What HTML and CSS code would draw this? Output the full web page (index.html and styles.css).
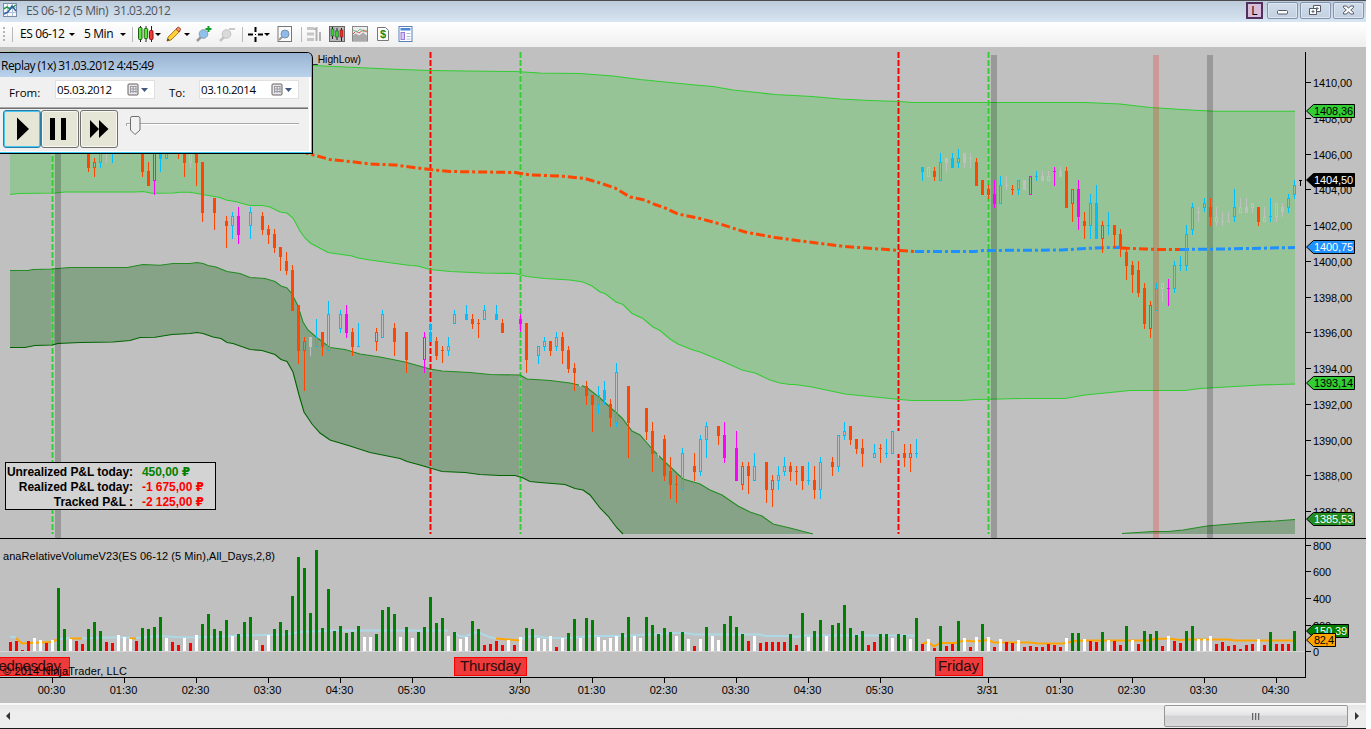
FILE: index.html
```html
<!DOCTYPE html>
<html lang="en">

<head>
    <meta charset="UTF-8">
    <title>ES 06-12 (5 Min) 31.03.2012</title>
    <link rel="stylesheet" href="styles.css">
</head>

<body>
    <div id="window">
        <div class="titlebar">
            <svg class="app-icon" width="14" height="14" viewBox="0 0 14 14">
                <rect x="0.5" y="0.5" width="13" height="13" fill="#f4f8fc" stroke="#7a8ba8" />
                <path d="M4.5 1v12M9.5 1v12M1 4.5h12M1 9.5h12" stroke="#b5c4dc" fill="none" />
                <path d="M1 6l3-2 3 2 6-4" stroke="#1c9a3c" stroke-width="1.5" fill="none" />
                <path d="M1 11l4-2 4-6 4 5" stroke="#2e5fa8" stroke-width="1.5" fill="none" />
            </svg>
            <span class="title">ES 06-12 (5 Min)&nbsp; 31.03.2012</span>
            <span class="link-btn">L</span>
            <span class="win-btn">
                <svg width="31" height="16" viewBox="0 0 31 16"><rect x="10.5" y="8.5" width="10" height="3.5" rx="1" fill="#fff" stroke="#555a68" /></svg>
            </span>
            <span class="win-btn">
                <svg width="31" height="16" viewBox="0 0 31 16" fill="#fff" stroke="#555a68"><path d="M13.5 3.5h7v6h-7z" /><path d="M16 6h2v1h-2z" /><path d="M9.5 6.5h7v6h-7z" /><path d="M12 9h2v1h-2z" /></svg>
            </span>
            <span class="win-btn">
                <svg width="31" height="16" viewBox="0 0 31 16"><path d="M10.5 4h3l2 2.3 2-2.3h3v1.500L17.700 8l2.800 2.500V12h-3l-2-2.300-2 2.300h-3v-1.500L13.300 8l-2.800-2.500z" fill="#fff" stroke="#555a68" /></svg>
            </span>
        </div>

        <div class="toolbar">
            <span class="grip"></span>
            <span class="sep"></span>
            <span class="label">ES 06-12</span>
            <i class="caret"></i>
            <span class="label">5 Min</span>
            <i class="caret"></i>
            <span class="sep"></span>
            <svg width="16" height="16" viewBox="0 0 16 16">
                <path d="M2.500 0v16M8 0v16M13.500 0v16" stroke="#222" />
                <rect x="0.500" y="1.500" width="3.500" height="12" rx="1" fill="#5ce63c" stroke="#1d5a12" />
                <rect x="6.200" y="2.500" width="3.500" height="10" rx="1" fill="#5ce63c" stroke="#1d5a12" />
                <rect x="11.500" y="4.500" width="3.500" height="9" rx="1" fill="#f23a3a" stroke="#8a1212" />
            </svg>
            <i class="caret"></i>
            <svg width="16" height="16" viewBox="0 0 16 16">
                <path d="M1 15l1.200-4L11 2.200l3 3L5 14z" fill="#ffd23c" stroke="#a87416" />
                <path d="M10 3.200l1.800-2c.8-.7 3.200 1.500 2.700 2.600L13 6z" fill="#f0906a" stroke="#a04a28" />
                <path d="M1 15l.8-2.500 1.800 1.500z" fill="#333" />
            </svg>
            <i class="caret"></i>
            <svg width="16" height="16" viewBox="0 0 16 16">
                <path d="M1 15l4-4" stroke="#999" stroke-width="2.500" />
                <circle cx="7.500" cy="8" r="4.300" fill="#8ec2ec" stroke="#8a9bb0" />
                <path d="M12.500 0v6M9.500 3h6" stroke="#12a028" stroke-width="2" />
            </svg>
            <svg width="16" height="16" viewBox="0 0 16 16">
                <path d="M1 15l4-4" stroke="#c4c4c4" stroke-width="2.500" />
                <circle cx="7.500" cy="8" r="4.300" fill="#dadada" stroke="#c0c0c0" />
                <path d="M10 3h6" stroke="#b8b8b8" stroke-width="1.500" />
            </svg>
            <span class="sep"></span>
            <svg width="15" height="15" viewBox="0 0 15 15">
                <path d="M7.500 0v5M7.500 10v5M0 7.500h5M10 7.500h5" stroke="#000" stroke-width="2" />
                <rect x="7" y="7" width="1" height="1" />
            </svg>
            <i class="caret"></i>
            <svg width="16" height="16" viewBox="0 0 16 16">
                <rect x="1" y="0.500" width="13.500" height="15" fill="#fafafa" stroke="#777" />
                <path d="M2 14l3-3" stroke="#999" stroke-width="2" />
                <circle cx="8" cy="8" r="4" fill="#8ebcea" stroke="#7a90b0" />
            </svg>
            <span class="sep"></span>
            <svg width="16" height="16" viewBox="0 0 16 16">
                <path d="M1 2.500h7M1 8h7M1 13.500h7" stroke="#c6c6c6" stroke-width="3" />
                <path d="M10.500 1v14M14 6v9M8 3h3" stroke="#b2b2b2" stroke-width="2" fill="none" />
            </svg>
            <svg width="16" height="16" viewBox="0 0 16 16">
                <rect x="0.500" y="0.500" width="15" height="15" fill="#b8b8b8" stroke="#666" />
                <path d="M3.500 1v12M8 2v12M12.500 2v13" stroke="#222" />
                <rect x="2" y="3" width="3" height="7" fill="#3ccf2c" stroke="#154" stroke-width=".5" />
                <rect x="6.500" y="5" width="3" height="6" fill="#3ccf2c" stroke="#154" stroke-width=".5" />
                <rect x="11" y="4" width="3" height="7" fill="#ee2c2c" stroke="#711" stroke-width=".5" />
            </svg>
            <svg width="16" height="16" viewBox="0 0 16 16">
                <rect x="0.500" y="0.500" width="15" height="14.500" fill="#ececec" stroke="#888" />
                <path d="M1 9l3-1.500 3 2 4-3 4 3V15H1z" fill="#aaa" />
                <path d="M1 8l3-3 3 2 4-3 4 2" stroke="#e05050" fill="none" />
                <path d="M1 4l4 2 3-3 4 3 3-2" stroke="#6cc48c" fill="none" />
            </svg>
            <svg width="14" height="16" viewBox="0 0 14 16">
                <path d="M1.500 1.500h8l3 3v10h-11z" fill="#fff" stroke="#777" />
                <text x="7" y="12" text-anchor="middle" class="dollar">$</text>
            </svg>
            <svg width="15" height="16" viewBox="0 0 15 16">
                <rect x="1" y="0.500" width="13" height="15" fill="#fff" stroke="#5a82b8" />
                <rect x="2.500" y="2" width="10" height="2.500" fill="#4a86d8" />
                <rect x="3" y="6.500" width="3.500" height="7" fill="#d8c6f4" stroke="#9a7ad8" />
                <path d="M8.500 7.500h4M8.500 10.500h4M8.500 13h4" stroke="#a8bcd8" />
            </svg>
        </div>

        <div class="chart-area">
            <svg id="chart" width="1366" height="656" viewBox="0 47 1366 656"></svg>

            <div class="pnl">
                <span>Unrealized P&amp;L today:</span><b class="plus">450,00 ₽</b>
                <span>Realized P&amp;L today:</span><b>-1 675,00 ₽</b>
                <span>Tracked P&amp;L :</span><b>-2 125,00 ₽</b>
            </div>

            <div class="replay">
                <div class="replay-title"><span>Replay (1x) 31.03.2012 4:45:49</span></div>
                <div class="dates">
                    <span class="from">From:</span>
                    <div class="date"><span>05.03.2012</span>
                        <svg width="22" height="14" viewBox="0 0 22 14"><rect x="1" y="1" width="10" height="11" rx="1" fill="#e8e8e8" stroke="#6a6060" /><path d="M3 3.500h6.500M3 6h6.500M3 8.500h6.500M3.500 3v7M6.200 3v7M9 3v7" stroke="#9a9aa4" /><path d="M14 5h7l-3.500 4z" fill="#44587c" /></svg>
                    </div>
                    <span class="to">To:</span>
                    <div class="date"><span>03.10.2014</span>
                        <svg width="22" height="14" viewBox="0 0 22 14"><rect x="1" y="1" width="10" height="11" rx="1" fill="#e8e8e8" stroke="#6a6060" /><path d="M3 3.500h6.500M3 6h6.500M3 8.500h6.500M3.500 3v7M6.200 3v7M9 3v7" stroke="#9a9aa4" /><path d="M14 5h7l-3.500 4z" fill="#44587c" /></svg>
                    </div>
                </div>
                <div class="controls">
                    <button class="active"><svg width="34" height="34" viewBox="0 0 34 34"><path d="M12 5.500v23l12-11.500z" /></svg></button>
                    <button><svg width="34" height="34" viewBox="0 0 34 34"><path d="M7 6h5v22H7zM18 6h5v22h-5z" /></svg></button>
                    <button class="forward"><svg width="34" height="34" viewBox="0 0 34 34"><path d="M8 8v18l9-9zM17 8v18l9.500-9z" /></svg></button>
                    <svg class="slider" width="176" height="24" viewBox="0 0 176 24">
                        <path d="M0 7.500h173" stroke="#a8a8a8" />
                        <path d="M0 8.500h173" stroke="#fff" />
                        <path d="M0.500 7v3" stroke="#a8a8a8" />
                        <path d="M6 .5h6q2 0 2 2V14l-5 4.500L4.500 14V2.500q0-2 1.500-2z" fill="#f2f2f2" stroke="#6e6e6e" />
                    </svg>
                </div>
            </div>
        </div>

        <div class="scrollbar">
            <span class="arrow left"></span>
            <span class="thumb"><i></i><i></i><i></i></span>
            <span class="arrow right"></span>
        </div>
        <div class="edge"></div>
    </div>
    <script src="chart.js"></script>
</body>

</html>
```
FILE: styles.css
```css
body {
    margin: 0;
    background: #fff;
    overflow: hidden;
    font-family: "Open Sans", "Noto Sans", sans-serif;
    font-size: 12px;
}

#window {
    width: 1366px;
    height: 729px;
    display: flex;
    flex-direction: column;
}

.titlebar {
    box-sizing: border-box;
    height: 22px;
    border-top: 1px solid #4c4c50;
    background: linear-gradient(#bccbdb, #d8e5f2);
    display: flex;
    align-items: flex-start;
    padding: 1px 2px 0 3px;
}

.app-icon {
    margin-top: 1px;
}

.title {
    flex: 1;
    margin-left: 9px;
    line-height: 17px;
    color: #4d5560;
    letter-spacing: -0.43px;
}

.link-btn {
    box-sizing: border-box;
    width: 17px;
    height: 17px;
    margin-right: 2px;
    border: 2px solid #50305c;
    background: #d8bcdc;
    line-height: 13px;
    text-align: center;
}

.win-btn {
    box-sizing: border-box;
    width: 31px;
    height: 17px;
    margin-left: 2px;
    border: 1px solid #8594ad;
    border-radius: 2px;
    background: linear-gradient(#d0dcea, #c2d0e0);
    box-shadow: inset 0 0 0 1px #dce6f0;
    overflow: hidden;
}

.win-btn svg {
    display: block;
    margin: -1px 0 0 -1px;
}

.toolbar {
    height: 25px;
    background: linear-gradient(#fff, #efefef);
    display: grid;
    grid-template-columns: 12px 8px 49px 15px 36px 12px 6px 17px 11px 18px 12px 23px 23px 6px 16px 13px 24px 5px 23px 23px 24px 22px 16px;
    align-items: center;
}

.toolbar svg {
    margin-top: -1px;
}

.toolbar .label {
    margin-top: -2px;
    letter-spacing: -0.4px;
    white-space: nowrap;
}

.grip {
    width: 2px;
    height: 15px;
    margin-left: 3px;
    background: repeating-linear-gradient(#b4b4b4 0 2px, transparent 2px 4px);
}

.sep {
    width: 1px;
    height: 15px;
    background: #b9b9b9;
}

.caret {
    border: 3px solid transparent;
    border-top-color: #000;
    border-bottom: 0;
    width: 0;
}

.dollar {
    font: bold 11px "Liberation Sans", sans-serif;
    fill: #148a14;
}

.chart-area {
    position: relative;
    height: 656px;
    background: #c0c0c0;
}

#chart {
    display: block;
    font-family: "Liberation Sans", Arial, sans-serif;
    font-size: 11px;
}

#chart .crisp {
    shape-rendering: crispEdges;
}

#chart .day {
    font-size: 15px;
    fill: #2a0c0c;
}

/* P&L summary lies over the lower left corner of the price panel */
.pnl {
    position: absolute;
    left: 5px;
    top: 415px;
    width: 209px;
    height: 46px;
    border: 1px solid #000;
    background: #d3d3d3;
    display: grid;
    grid-template-columns: 127px auto;
    grid-auto-rows: 15px;
    column-gap: 9px;
    font: bold 12px/19px "Liberation Sans", "DejaVu Sans", sans-serif;
    letter-spacing: -0.05px;
    white-space: nowrap;
}

.pnl span {
    text-align: right;
}

.pnl b {
    color: #f00;
}

.pnl .plus {
    color: #008000;
}

/* floating replay window */
.replay {
    position: absolute;
    left: 0;
    top: 5px;
    box-sizing: border-box;
    width: 313px;
    height: 102px;
    border: 1px solid #000;
    border-left: 0;
    border-top-right-radius: 6px;
    background: #f0f0f0;
    box-shadow: inset -1px -1px 0 #3cc8f0, inset -3px -2px 0 #fff;
    overflow: hidden;
}

.replay-title {
    height: 24px;
    margin-right: 1px;
    padding-left: 1px;
    line-height: 25px;
    letter-spacing: -0.53px;
    background: linear-gradient(#98b3d1, #bad2eb);
}

.dates {
    display: flex;
    height: 31px;
    margin-right: 4px;
    border-bottom: 1px solid #707070;
    box-shadow: 0 -1px 0 #a8a8a8 inset;
    font-size: 11.5px;
}

.dates > span {
    line-height: 32px;
}

.from {
    width: 46px;
    padding-left: 9px;
}

.to {
    width: 30px;
    padding-left: 14px;
}

.date {
    box-sizing: border-box;
    width: 100px;
    height: 19px;
    margin-top: 3px;
    border: 1px solid #e0e0e0;
    background: #fff;
    display: flex;
    justify-content: space-between;
    padding: 0 5px 0 1px;
    line-height: 18px;
    letter-spacing: -0.4px;
}

.date svg {
    margin-top: 2px;
}

.controls {
    display: flex;
    padding: 1px 0 0 3px;
}

.controls button {
    box-sizing: border-box;
    width: 38px;
    height: 38px;
    padding: 0;
    border: 1px solid #707070;
    border-radius: 3px;
    background: #e6e6d6;
    box-shadow: inset 0 0 0 1px #f8f8f0;
}

.controls button svg {
    display: block;
    margin: 1px;
}

.controls .active {
    border-color: #2c7ca8;
    box-shadow: inset 0 0 0 1px #48c8f0;
}

.controls .forward {
    margin-left: 1px;
}

.slider {
    margin: 6px 0 0 8px;
}

.scrollbar {
    box-sizing: border-box;
    height: 25px;
    border-top: 2px solid #f8f8f8;
    background: linear-gradient(#e4e4e4, #eeeeee 30%, #ececec);
    display: flex;
    align-items: center;
    padding-bottom: 1px;
}

.arrow {
    border: 4px solid transparent;
    width: 0;
}

.arrow.left {
    margin-left: 2px;
    border-right-color: #333;
}

.arrow.right {
    margin: 0 3px 0 7px;
    border-left-color: #333;
}

.thumb {
    box-sizing: border-box;
    width: 184px;
    height: 22px;
    margin-left: auto;
    border: 1px solid #979797;
    border-radius: 2px;
    background: linear-gradient(#f3f3f3, #e6e6e8 45%, #d2d2d4 50%, #dadadc);
    display: flex;
    justify-content: center;
    align-items: center;
    gap: 1px;
}

.thumb i {
    width: 2px;
    height: 7px;
    background: linear-gradient(90deg, #666 50%, #bbb 50%);
}

.edge {
    height: 1px;
    background: #16181c;
}
```
FILE: chart.js
```js
const chart = document.getElementById("chart");
const NS = "http://www.w3.org/2000/svg";

function add(tag, attrs, text) {
    const el = document.createElementNS(NS, tag);
    for (const k in attrs) el.setAttribute(k, attrs[k]);
    if (text !== undefined) el.textContent = text;
    chart.appendChild(el);
    return el;
}

function line(points, color, width, dash) {
    const a = { points: points, fill: "none", stroke: color, "stroke-width": width };
    if (dash) a["stroke-dasharray"] = dash;
    add("polyline", a);
}

function rect(x, y, w, h, fill) {
    add("rect", { x: x, y: y, width: w, height: h, fill: fill, class: "crisp" });
}

// deviation bands
const top1 = "10,52 313,65.500 345,67 400,69.500 430,70.500 465,71 515,71.500 540,73 580,73.500 613,76 640,79.500 665,82 695,85 713,86.500 733,90 775,94.500 812,96.500 840,99 870,100.500 900,101.500 912,102.500 1085,102.500 1120,104 1150,107.500 1190,110 1215,111.300 1295,111.300";
const low1 = "10,194.500 18,193.500 55,193 65,192 135,192 143,191.500 152,193.300 173,193 180,192.300 190,192.300 200,194 220,197.500 226,200 235,201.500 250,205.500 262,205.500 270,207 280,212 287,213 293,218 300,231 305,238 311,243.500 328,252.500 352,256 358,258 370,260 410,265.500 418,266 430,269.500 450,271.500 483,273 515,273.500 527,276.500 545,278.500 570,280 583,282 592,286 600,292 605,293.500 616,302 623,304.500 632,313.500 643,318.500 653,327 660,330.500 670,339 678,344 693,350 700,352 722,361 742,370 755,373 770,380 780,383 790,384.500 795,384.500 812,387 845,394 870,396.500 900,399.500 912,400.500 962,400.500 975,399.500 1000,399 1020,398.500 1065,398.500 1085,395 1110,392.500 1130,390.500 1185,390.500 1200,388.500 1230,386.800 1260,385 1295,384";
const top2 = "10,270.500 28,270.500 33,269.500 52,269 70,267.500 127,267.500 143,264.500 160,265.300 173,263.500 190,263.500 197,262.500 203,263.500 208,265.500 216,267 227,271.500 240,273.500 250,277.500 265,278.500 275,281.500 281,286 287,288 292,294 298,306 303,322 308,330 316,337 330,347.500 345,349.500 360,354 380,357 405,362 430,369 442,371 470,372.500 490,374.500 520,375 527,379 550,380.500 570,383 583,386 588,388.500 600,398 612,409 622,418 632,431 640,435 647,443 655,452 665,462 683,479 700,484 710,490 722,495 738,506 750,512 762,516 773,524 790,528 813,534";
const low2 = "10,347.500 25,347.500 35,345.500 52,345 58,343.500 80,342.500 113,342 130,340.500 140,337.500 155,337.300 172,334.500 190,333.500 197,332.500 203,333.500 213,337 221,338.500 227,342.500 233,343.500 250,349.500 262,350.500 275,354.500 281,359.500 287,361.500 293,372 299,395 304,412 312,424 320,433 330,440 350,446 370,452.500 400,458.500 407,461.500 420,465 442,471.500 465,472.500 480,474.500 500,475.500 515,475.500 522,477.500 530,481.500 540,482.500 565,484.500 575,488.500 583,490 590,495 600,508 608,516 617,528 623,534";
const top3 = "1122,533.500 1153,531.500 1168,531.500 1183,530 1207,526 1230,524 1255,522 1275,521 1295,519.500";

function band(upper, lower, fill) {
    add("polygon", { points: upper + " " + lower.split(" ").reverse().join(" "), fill: fill });
}
band(top1, low1, "#96c496");
band(top2, low2, "#87a387");
band(top3, "1122,534 1295,534", "#87a387");

// session lines
[[52.5, "#32cd32"], [430.5, "#f00"], [520.5, "#32cd32"], [898.5, "#f00"], [988.5, "#32cd32"]].forEach(function (v) {
    add("path", { d: "M" + v[0] + " 52V534", stroke: "#d8c8c8", "stroke-opacity": 0.35, "stroke-width": 3 });
    line(v[0] + ",52 " + v[0] + ",534", v[1], 2, "6 2");
});

line(top1, "#32cd32", 1.1);
line(low1, "#32cd32", 1.1);
line(top2, "#228b22", 1.1);
line(low2, "#006400", 1.1);
line(top3, "#228b22", 1.1);

// highlighted bars
[[55, "#000"], [991, "#000"], [1153, "#f00"], [1207, "#000"]].forEach(function (b) {
    add("rect", { x: b[0], y: 55, width: 6, height: 483, fill: b[1], "fill-opacity": 0.2, class: "crisp" });
});

// vwap
const dashes = "9 3 3 3";
line("300,151 308,153.500 330,159.500 350,161.500 370,164 395,165 410,167 430,169.500 450,171.500 515,172.500 530,175 560,176 585,178.500 600,183 615,188 630,197 645,200 655,204.500 665,208 678,214 700,218.500 720,224 745,232 775,237.500 805,241.500 845,246.500 900,250.500 915,251.500", "#ff4500", 3, dashes);
line("915,251.500 975,251.500 983,250.500 1062,250 1085,248.500 1115,247.300 1121,247.500", "#1e90ff", 3, dashes);
line("1121,248 1145,249 1158,249.500 1180,249.500", "#ff4500", 3, dashes);
line("1180,249.500 1225,249 1295,247.500", "#1e90ff", 3, dashes);

// candles: index, colour, high, body top, body bottom, low, hollow
const colors = { o: "#ff4500", b: "#00bfff", m: "#ff00ff", g: "#c0c0c0" };
const candles = `13 o 140 140 168 172|14 o 158 162 168 177 h|15 b 140 140 163 168 h|16 g 140 140 141 163|17 b 140 140 141 163|22 o 140 140 172 177
23 o 162 171 186 186|24 m 140 140 181 195 h|25 b 140 140 159 172|26 b 140 140 159 159 h|28 o 140 140 141 159|29 o 140 140 163 177|30 g 140 140 163 168 h
31 o 140 140 163 186|32 o 162 162 213 222|34 o 198 198 213 230|36 o 216 221 226 248|37 b 212 216 226 239 h|38 m 207 216 235 244|40 b 207 212 226 239 h
42 o 212 216 230 235|43 o 225 229 235 244|44 o 229 234 248 253|45 o 247 247 257 271|46 o 252 261 271 275|47 o 265 270 311 311|48 o 305 305 351 364
49 o 337 341 351 391 h|50 g 337 337 347 356|51 b 319 337 347 347 h|52 o 332 332 347 356|53 b 301 314 351 351 h|55 b 310 314 329 333 h|56 m 305 314 333 338
57 o 328 332 347 356|58 b 323 346 347 347|61 o 328 332 342 351 h|62 b 310 314 338 338 h|64 o 323 328 342 356|66 o 332 332 360 373|69 m 332 337 360 373 h
70 b 323 337 342 342|71 o 337 341 356 360|72 o 346 350 351 363|73 b 337 346 351 356 h|74 b 310 314 324 324 h|76 b 305 314 320 320|77 o 314 319 324 329
78 o 319 323 324 338|79 b 305 310 320 320 h|81 b 305 314 320 320|82 o 319 323 333 333|85 m 314 319 324 332|86 o 323 323 360 373|88 b 346 346 356 364 h
89 b 337 341 347 351 h|90 o 341 341 351 356|91 b 332 337 347 351 h|92 o 332 337 351 364|93 o 346 350 369 373|94 o 363 368 373 391|95 g 381 381 386 387
96 o 381 386 396 405|97 o 395 395 405 432|98 b 386 395 405 414 h|99 b 381 390 400 405|100 o 399 404 418 427|101 b 363 372 423 427 h|103 o 386 386 423 458
106 o 408 408 432 440|107 o 422 431 454 472|108 g 454 454 455 458|109 o 435 439 476 481|110 o 457 471 485 499|111 o 475 484 485 503|112 b 448 453 490 490 h
114 o 453 466 472 481|115 b 435 439 472 476 h|116 b 422 426 440 458 h|118 o 426 426 436 445|119 m 422 435 458 463|121 m 431 448 481 481|122 o 462 466 485 490 h
123 o 462 466 476 494|124 b 453 466 481 481 h|126 o 462 462 490 503|127 o 475 480 490 507 h|128 b 466 475 481 490 h|129 b 457 466 472 476 h|130 o 462 466 472 481
131 o 466 471 472 485|132 o 466 466 481 490|133 b 462 480 481 485|134 o 466 480 490 499|135 b 457 462 490 499 h|137 o 457 462 467 476|138 b 435 435 467 472 h
139 b 422 431 436 440 h|140 o 426 426 440 445|141 o 439 439 449 454|142 o 439 448 454 467|144 b 444 453 458 458 h|145 o 444 448 449 463|146 b 439 453 454 458
147 b 431 431 454 454 h|148 g 431 431 454 454|149 o 444 453 458 467|150 o 444 453 458 472 h|151 b 439 453 454 458|152 b 167 167 172 181|153 g 167 167 177 177 h
154 o 167 171 177 181|155 b 153 162 181 181 h|156 g 158 158 163 172|157 b 153 158 168 168|158 b 149 158 163 168 h|159 g 153 153 163 168|160 g 153 158 159 168
161 o 158 162 186 186|162 o 180 180 195 195|163 o 185 189 195 199|164 m 180 194 204 208|165 b 176 185 204 204 h|166 g 176 185 186 190|167 o 185 189 190 195
168 b 180 180 190 195 h|169 g 180 180 190 190|170 m 176 176 195 195 h|171 b 171 176 177 181|172 g 171 176 181 181|173 g 171 176 181 181 h|174 m 167 171 172 186
175 g 167 171 177 177|176 o 167 171 208 208|177 o 189 189 204 222 h|178 m 180 189 217 230|179 o 212 221 226 239|180 b 194 203 226 239 h|181 b 185 203 239 239
182 o 221 225 239 253 h|183 b 212 225 226 235|184 o 225 225 235 248|185 o 229 234 248 257|186 o 249 252 266 280|187 o 261 265 275 293|188 o 261 270 293 297
189 o 283 288 324 329|190 o 301 305 329 338 h|191 b 283 288 311 311 h|192 g 283 283 289 302 h|193 m 279 288 289 306|194 b 261 265 289 293 h|195 b 256 265 266 271
196 b 225 234 266 271 h|197 b 203 207 230 235 h|198 g 207 212 213 222|199 b 198 203 208 212 h|200 o 198 207 217 226|201 g 207 217 222 226 h|202 g 212 221 222 226
203 g 212 221 222 222|204 b 189 207 217 222 h|205 g 198 207 213 213 h|206 g 198 207 213 213|207 g 203 203 208 213 h|208 o 207 207 222 226|209 g 207 217 222 222 h
210 b 198 216 217 222|211 g 203 203 217 222 h|212 g 203 207 212 217|213 b 194 198 208 213 h|214 b 180 185 195 199 h`;

candles.split(/[|\n]/).forEach(function (row) {
    const c = row.trim().split(" ");
    const x = 9 + 6 * c[0];
    const color = colors[c[1]];
    const high = +c[2], top = +c[3], bottom = +c[4], low = +c[5];
    if (top > high) rect(x + 1, high, 1, top - high, color);
    if (low > bottom) rect(x + 1, bottom, 1, low - bottom, color);
    if (c[6]) {
        rect(x, top, 1, bottom - top, color);
        rect(x + 2, top, 1, bottom - top, color);
        rect(x + 1, top, 1, 1, color);
        rect(x + 1, bottom - 1, 1, 1, color);
    } else {
        rect(x, top, 3, bottom - top, color);
    }
});
rect(1299, 180, 3, 1, "#000");
rect(1300, 180, 1, 6, "#000");

// relative volume averages
const blue = "#add8e6", orange = "#ffa500";
line("10,636.500 16,637.500", blue, 2);
line("16,638 22,643.500 30,643 52,642 57,639.500", orange, 2);
line("57,639 70,638", blue, 2);
line("70,638.500 82,638.500", orange, 2);
line("82,638.500 100,637.500 130,637.500", blue, 2);
line("130,638.500 136,638.500", orange, 2);
line("136,638 160,636 175,637 195,637.500 240,635.500 285,634.500 300,632 330,630.500 448,630.500", blue, 2);
line("454,633 460,636 465,636.500 475,632.500 480,633 488,636.500 496,638.500", blue, 2);
line("496,638.500 520,640.500", orange, 2);
line("520,640 526,637 535,636 548,638 570,638 590,636 625,636 645,634.500 660,634.500 670,633 685,633 695,634.500 760,634.500 765,636 790,636 796,637 805,635.500 916,635.500", blue, 2);
line("922,644 928,642 934,646.500 940,643 955,643 964,640.500 975,641.500 988,640 994,642.500 1030,642.500 1038,643.500 1063,643.500 1075,641 1085,640.500 1150,640.500 1155,638.800 1170,638.800 1180,640 1190,639.500 1228,639.500 1235,640.500 1295,640.500", orange, 2);

rect(0, 651, 1305, 1, "#d6d6d6");

// volume bars, one per candle slot
const volume = `r9 r10 r1 r10 w13 w11 r8 w11 g63 g22 w12 r10 r7 g22 g29 g20 r9 r8 w16 w14 w12 r10 g23 g22 g24 g34 w13 r9 r6 w13 r8 w16 g27 g37 g22 g20 g31 w15 g17 g29
g34 w11 r6 w16 g22 g29 g21 g55 g94 g83 g38 g101 g23 g62 g20 g25 g18 g19 g25 w14 w14 g17 g41 g44 g37 w14 g24 w13 g19 g24 g54 g28 g33 w15 g19 w12 w14 g30 g22 r6
r7 r10 r6 w11 r6 w14 g23 g22 w13 w12 w15 r4 w13 g18 g32 w13 g33 g31 w14 w11 w13 w15 g18 g34 w15 w13 g34 g26 g17 g23 g19 w15 g19 w12 r5 w12 g24 w15 w11 g27
g35 g24 g17 r10 w15 r8 r9 r9 r9 r9 g17 r6 g38 w14 g20 g31 w15 g26 g28 g46 g23 g16 g20 r6 r9 g17 g17 w13 g17 g16 w12 g33 r7 w12 r3 g25 r5 r7 g30 w13
r4 w14 g27 w14 r4 w12 r9 r8 w11 r4 r5 r4 r4 r7 r6 r4 w13 g18 g18 w12 r10 r9 g19 w11 r10 r6 g25 w11 r7 g20 g17 g20 r5 w15 r10 r8 g20 g25 w12 w12
w15 r7 r9 r5 r6 r2 r6 r7 w12 r6 g19 r7 r7 r7 g20`;
const volumeColors = { r: "#f00", w: "#fff", g: "#008000" };
volume.split(/\s+/).forEach(function (v, i) {
    const h = +v.slice(1);
    rect(9 + 6 * i, 651 - h, 3, h, volumeColors[v[0]]);
});

// axes
rect(1305, 52, 1, 626, "#000");
rect(0, 538, 1366, 1, "#000");
rect(0, 677, 1306, 1, "#000");

function axisLabel(y, text, length) {
    rect(1306, y, 5, 1, "#000");
    add("text", { x: 1313, y: y + 4.5, textLength: length }, text);
}
[82, 118, 154, 189, 225, 261, 297, 332, 368, 404, 440, 475, 511].forEach(function (y, i) {
    axisLabel(y, (1410 - 2 * i) + ",00", 39);
});
[545, 571, 598, 625, 651].forEach(function (y, i) {
    axisLabel(y, String(800 - 200 * i), i < 4 ? 18 : 6);
});

const times = [[52, "00:30"], [124, "01:30"], [196, "02:30"], [268, "03:30"], [340, "04:30"], [412, "05:30"], [520, "3/30"], [592, "01:30"], [664, "02:30"], [736, "03:30"], [808, "04:30"], [880, "05:30"], [988, "3/31"], [1060, "01:30"], [1132, "02:30"], [1204, "03:30"], [1276, "04:30"]];
times.forEach(function (t) {
    rect(t[0], 678, 1, 5, "#000");
    add("text", { x: t[0] - 0.5, y: 694, "text-anchor": "middle" }, t[1]);
});

// price markers
function tag(y, right, fill, color, text) {
    add("polygon", { points: `1306.500,${y} 1313.500,${y - 6.5} ${right},${y - 6.5} ${right},${y + 6.5} 1313.500,${y + 6.5}`, fill: fill, stroke: "#000" });
    add("text", { x: 1314, y: y + 4, fill: color, textLength: right - 1315.5 }, text);
}
tag(111, 1354.5, "#32cd32", "#000", "1408,36");
tag(180, 1354.5, "#000", "#fff", "1404,50");
tag(247, 1354.5, "#1e90ff", "#fff", "1400,75");
tag(383, 1354.5, "#32cd32", "#000", "1393,14");
tag(519, 1354.5, "#228b22", "#fff", "1385,53");
tag(631, 1348.5, "#008000", "#fff", "150,39");
tag(640, 1335.5, "#ffa500", "#000", "82,4");

// weekday boxes
function day(x, w, textX, text, length) {
    add("rect", { x: x + 0.5, y: 657.5, width: w, height: 18, fill: "#ee3a3a", stroke: "#f00" });
    add("text", { x: textX, y: 671, class: "day", textLength: length }, text);
}
day(-10, 79, -15, "Wednesday", 76);
day(454, 72, 460, "Thursday", 61);
day(935, 47, 938, "Friday", 41);

add("text", { x: 3, y: 675, textLength: 124 }, "© 2014 NinjaTrader, LLC");
add("text", { x: 3, y: 560, textLength: 272 }, "anaRelativeVolumeV23(ES 06-12 (5 Min),All_Days,2,8)");
add("text", { x: 312, y: 63, textLength: 49, lengthAdjust: "spacingAndGlyphs" }, "_HighLow)");
```
